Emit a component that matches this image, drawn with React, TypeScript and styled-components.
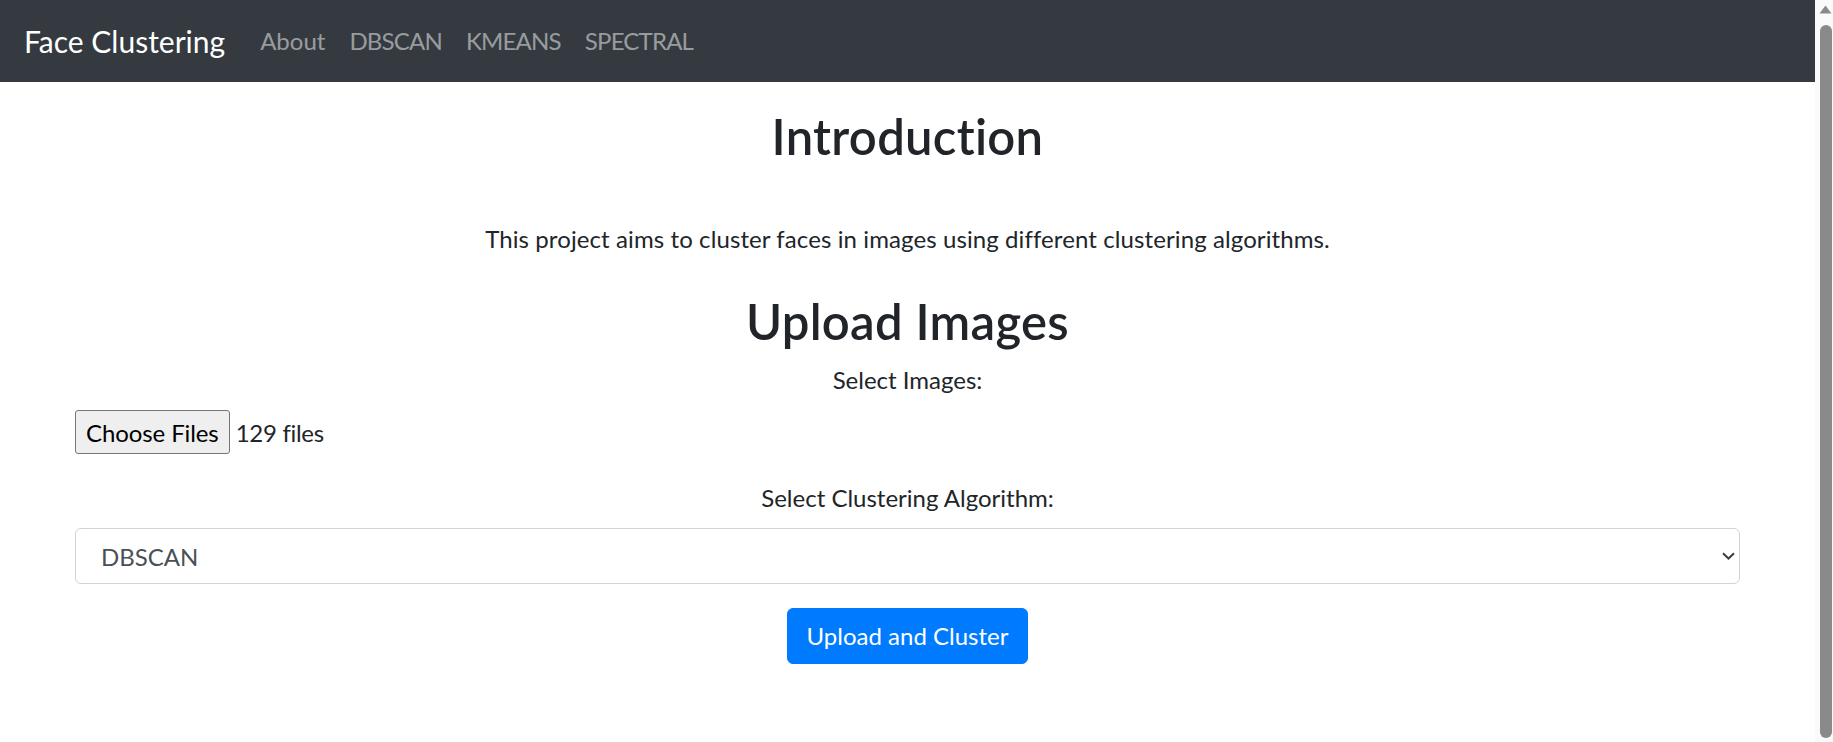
import React from "react";
import styled, { createGlobalStyle } from "styled-components";

const GlobalStyle = createGlobalStyle`
  html, body {
    margin: 0;
    padding: 0;
    height: 100%;
    overflow: hidden;
    background: #ffffff;
  }
  body {
    font-family: "Lato", "Noto Sans", "Liberation Sans", sans-serif;
    color: #212529;
  }
  * { box-sizing: border-box; }
`;

const Page = styled.div`
  display: flex;
  flex-direction: row;
  width: 100vw;
  height: 100vh;
`;

const Main = styled.div`
  flex: 1;
  min-width: 0;
  display: flex;
  flex-direction: column;
`;

const NavBar = styled.nav`
  height: 82px;
  background: #343a40;
  display: flex;
  align-items: center;
  padding: 0 24px;
`;

const Brand = styled.a`
  font-size: 30px;
  line-height: 45px;
  color: #ffffff;
  margin-right: 23px;
  text-decoration: none;
  white-space: nowrap;
`;

const NavList = styled.ul`
  display: flex;
  list-style: none;
  margin: 0;
  padding: 0;
`;

const NavLink = styled.a<{ $caps?: boolean }>`
  display: block;
  padding: 0 12px;
  font-size: 24px;
  line-height: 36px;
  letter-spacing: ${(p) => (p.$caps ? "-0.8px" : "0")};
  color: rgba(255, 255, 255, 0.5);
  text-decoration: none;
`;

const Container = styled.main`
  width: 1710px;
  max-width: 100%;
  margin: 0 auto;
  padding: 26px 22.5px 0;
`;

const Heading = styled.h2`
  margin: 0 0 12px;
  font-size: 49px;
  line-height: 57.6px;
  letter-spacing: 0.3px;
  font-weight: 600;
  text-align: center;
  color: #212529;
`;

const Lead = styled.p`
  margin: 55px 0 36px;
  font-size: 24px;
  line-height: 36px;
  letter-spacing: 0.1px;
  text-align: center;
`;

const Form = styled.form`
  display: flex;
  flex-direction: column;
`;

const FormGroup = styled.div<{ $gap: number }>`
  margin-bottom: ${(p) => p.$gap}px;
`;

const Label = styled.label`
  display: block;
  margin-bottom: 12px;
  font-size: 24px;
  line-height: 36px;
  text-align: center;
`;

const FileRow = styled.div`
  display: flex;
  align-items: center;
  gap: 6px;
  height: 44px;
`;

const FileButton = styled.button`
  height: 44px;
  padding: 0 10px;
  background: #efefef;
  border: 1px solid #767676;
  border-radius: 3px;
  font-family: inherit;
  font-size: 24px;
  letter-spacing: -0.1px;
  color: #000000;
`;

const FileName = styled.span`
  font-size: 24px;
  letter-spacing: -0.3px;
  color: #212529;
`;

const SelectWrap = styled.div`
  position: relative;
`;

const Select = styled.select`
  display: block;
  width: 100%;
  height: 56px;
  padding: 0 40px 0 25px;
  font-family: inherit;
  font-size: 24px;
  color: #495057;
  background: #ffffff;
  border: 1px solid #ced4da;
  border-radius: 6px;
  appearance: none;
  -webkit-appearance: none;
  outline: none;
`;

const Chevron = styled.svg`
  position: absolute;
  right: 5px;
  top: 50%;
  width: 13px;
  height: 8px;
  margin-top: -4px;
  pointer-events: none;
`;

const SubmitRow = styled.div`
  display: flex;
  justify-content: center;
`;

const PrimaryButton = styled.button`
  height: 56px;
  padding: 0 19px;
  background: #007bff;
  color: #ffffff;
  border: 1px solid #007bff;
  border-radius: 6px;
  font-family: inherit;
  font-size: 24px;
  line-height: 36px;
`;

const ScrollTrack = styled.div`
  width: 18px;
  flex: none;
  background: #fafafa;
  display: flex;
  flex-direction: column;
  align-items: flex-end;
  padding: 5px 1px 4px 0;
`;

const ScrollArrow = styled.svg`
  width: 13px;
  height: 9px;
  flex: none;
`;

const ScrollThumb = styled.div`
  width: 12px;
  margin-top: 11px;
  flex: 1;
  background: #8a8a8a;
  border-radius: 6px;
`;

const navItems = [
  { label: "About", caps: false },
  { label: "DBSCAN", caps: true },
  { label: "KMEANS", caps: true },
  { label: "SPECTRAL", caps: true },
];

export default function App() {
  return (
    <>
      <GlobalStyle />
      <Page>
        <Main>
          <NavBar>
            <Brand href="#">Face Clustering</Brand>
            <NavList>
              {navItems.map((item) => (
                <li key={item.label}>
                  <NavLink href="#" $caps={item.caps}>
                    {item.label}
                  </NavLink>
                </li>
              ))}
            </NavList>
          </NavBar>
          <Container>
            <Heading>Introduction</Heading>
            <Lead>
              This project aims to cluster faces in images using different clustering algorithms.
            </Lead>
            <Heading>Upload Images</Heading>
            <Form onSubmit={(e) => e.preventDefault()}>
              <FormGroup $gap={26}>
                <Label>Select Images:</Label>
                <FileRow>
                  <FileButton type="button">Choose Files</FileButton>
                  <FileName>129 files</FileName>
                </FileRow>
              </FormGroup>
              <FormGroup $gap={24}>
                <Label>Select Clustering Algorithm:</Label>
                <SelectWrap>
                  <Select defaultValue="DBSCAN">
                    <option value="DBSCAN">DBSCAN</option>
                    <option value="KMEANS">KMEANS</option>
                    <option value="SPECTRAL">SPECTRAL</option>
                  </Select>
                  <Chevron viewBox="0 0 13 8">
                    <path d="M1 1.2 L6.5 6.5 L12 1.2" fill="none" stroke="#3c4043" strokeWidth="2" />
                  </Chevron>
                </SelectWrap>
              </FormGroup>
              <SubmitRow>
                <PrimaryButton type="submit">Upload and Cluster</PrimaryButton>
              </SubmitRow>
            </Form>
          </Container>
        </Main>
        <ScrollTrack>
          <ScrollArrow viewBox="0 0 13 9">
            <path d="M6.5 0.5 L12.5 8.5 L0.5 8.5 Z" fill="#8a8a8a" />
          </ScrollArrow>
          <ScrollThumb />
        </ScrollTrack>
      </Page>
    </>
  );
}
